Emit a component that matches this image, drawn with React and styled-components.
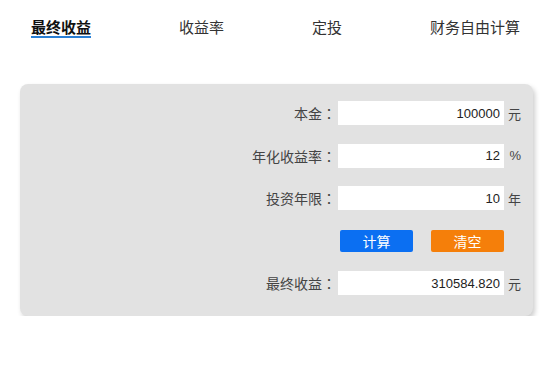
import React, { useState } from "react";
import styled, { createGlobalStyle } from "styled-components";

const GlobalStyle = createGlobalStyle`
  body {
    margin: 0;
    background: #fff;
    font-family: "Liberation Sans", "Noto Sans CJK SC", sans-serif;
    color: #333;
  }
`;

const tabs = ["最终收益", "收益率", "定投", "财务自由计算"];

function App() {
  const [active, setActive] = useState(0);
  return (
    <Page>
      <GlobalStyle />
      <Nav>
        {tabs.map((t, i) => (
          <Tab key={t} active={i === active} onClick={() => setActive(i)}>
            {t}
          </Tab>
        ))}
      </Nav>
      <Card>
        <Label>本金<Colon>：</Colon></Label>
        <Field defaultValue="100000" />
        <Unit>元</Unit>

        <Label>年化收益率<Colon>：</Colon></Label>
        <Field defaultValue="12" />
        <Unit>%</Unit>

        <Label>投资年限<Colon>：</Colon></Label>
        <Field defaultValue="10" />
        <Unit>年</Unit>

        <span />
        <Buttons>
          <Button color="#0b6ff2">计算</Button>
          <Button color="#f57f0a">清空</Button>
        </Buttons>
        <span />

        <Label>最终收益<Colon>：</Colon></Label>
        <Field defaultValue="310584.820" readOnly />
        <Unit>元</Unit>
      </Card>
    </Page>
  );
}

const Page = styled.div`
  width: 551px;
`;

const Nav = styled.nav`
  display: flex;
  justify-content: space-between;
  align-items: flex-start;
  padding: 19px 31px 0;
  height: 19px;
`;

const Tab = styled.div`
  font-size: 15px;
  line-height: 17px;
  cursor: pointer;
  color: ${(p) => (p.active ? "#111" : "#333")};
  font-weight: ${(p) => (p.active ? "bold" : "normal")};
  border-bottom: 2px solid ${(p) => (p.active ? "#2a7fd4" : "transparent")};
`;

const Card = styled.div`
  margin: 46px 0 0 20px;
  width: 513px;
  box-sizing: border-box;
  background: #e2e2e2;
  border-radius: 8px;
  box-shadow: 2px 3px 5px rgba(0, 0, 0, 0.2);
  padding: 17px 12px 21px 0;
  display: grid;
  grid-template-columns: 1fr 166px 15px;
  grid-auto-rows: 24px;
  column-gap: 2px;
  row-gap: 18.5px;
  align-items: center;
`;

const Label = styled.span`
  font-size: 14px;
  color: #444;
  text-align: right;
  white-space: nowrap;
`;

const Colon = styled.span`
  font-family: "Noto Sans CJK TC", sans-serif;
`;

const Field = styled.input`
  width: 166px;
  height: 24px;
  box-sizing: border-box;
  border: none;
  outline: none;
  background: #fff;
  padding: 0 4px;
  text-align: right;
  font-family: "Liberation Sans", sans-serif;
  font-size: 13px;
  color: #222;
`;

const Unit = styled.span`
  font-size: 13px;
  color: #444;
  text-align: right;
`;

const Buttons = styled.div`
  display: flex;
  justify-content: flex-end;
  gap: 18px;
`;

const Button = styled.button`
  width: 73px;
  height: 22px;
  border: none;
  border-radius: 2px;
  background: ${(p) => p.color};
  color: #fff;
  font-family: "Noto Sans CJK SC", sans-serif;
  font-size: 14px;
  line-height: 22px;
  padding: 0;
  cursor: pointer;
`;

export default App;
